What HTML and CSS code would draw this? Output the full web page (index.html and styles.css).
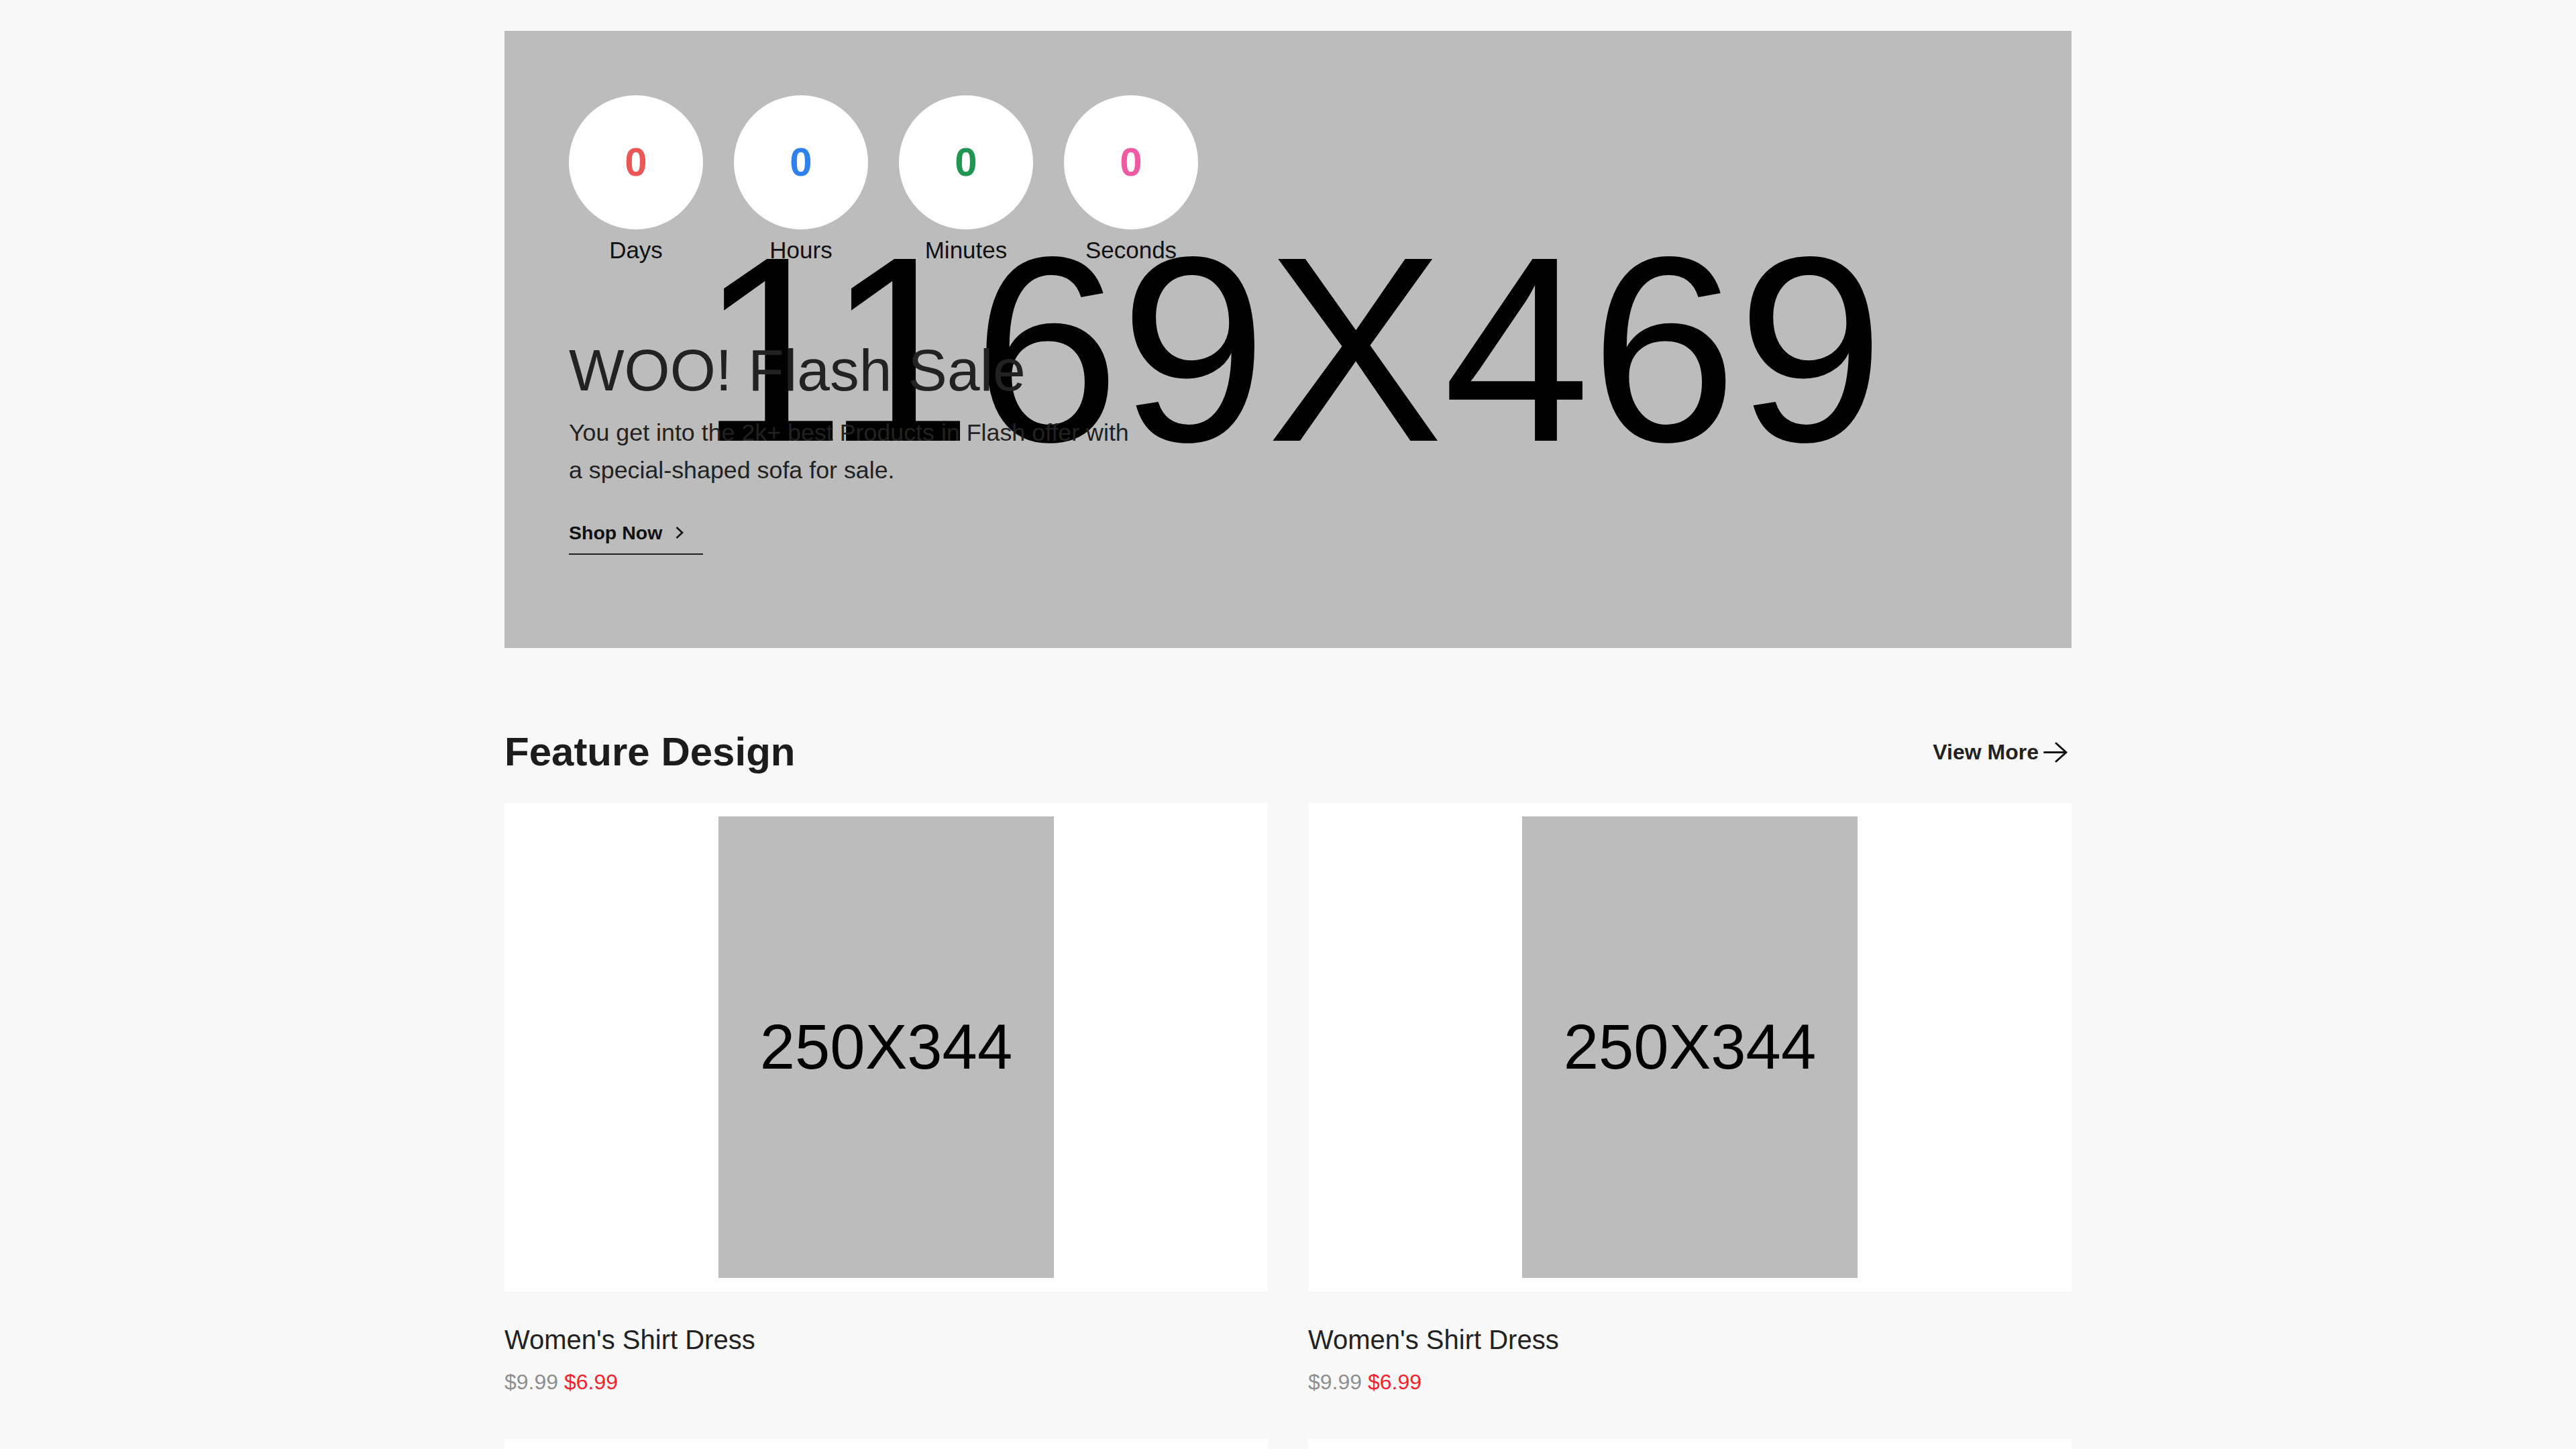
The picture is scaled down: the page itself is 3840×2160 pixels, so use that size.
FILE: index.html
```html
<!DOCTYPE html>
<html lang="en">
<head>
<meta charset="utf-8">
<title>Flash Sale</title>
<link rel="stylesheet" href="styles.css">
</head>
<body>
<main class="page">
  <section class="banner">
    <div class="banner-ph">1169X469</div>
    <div class="banner-content">
      <div class="countdown">
        <div class="cd-item">
          <div class="cd-circle cd-red">0</div>
          <div class="cd-label">Days</div>
        </div>
        <div class="cd-item">
          <div class="cd-circle cd-blue">0</div>
          <div class="cd-label">Hours</div>
        </div>
        <div class="cd-item">
          <div class="cd-circle cd-green">0</div>
          <div class="cd-label">Minutes</div>
        </div>
        <div class="cd-item">
          <div class="cd-circle cd-pink">0</div>
          <div class="cd-label">Seconds</div>
        </div>
      </div>
      <h1 class="flash-title">WOO! Flash Sale</h1>
      <p class="flash-text">You get into the 2k+ best Products in Flash offer with a special-shaped sofa for sale.</p>
      <a class="shop-link" href="#">Shop Now
        <svg class="chev" width="14" height="20" viewBox="0 0 14 20" aria-hidden="true"><polyline points="2.5,2 11,10 2.5,18" fill="none" stroke="#1a1a1a" stroke-width="2.8" stroke-linecap="butt" stroke-linejoin="miter"/></svg>
      </a>
    </div>
  </section>

  <section class="feature">
    <div class="feature-head">
      <h2 class="feature-title">Feature Design</h2>
      <a class="view-more" href="#">View More
        <svg class="arrow" width="36" height="31" viewBox="0 0 36 31" aria-hidden="true"><line x1="1.5" y1="15.5" x2="34" y2="15.5" stroke="#111" stroke-width="3" stroke-linecap="round"/><polyline points="19,2 34,15.5 19,29" fill="none" stroke="#111" stroke-width="3" stroke-linecap="round" stroke-linejoin="round"/></svg>
      </a>
    </div>
    <div class="products">
      <article class="product">
        <div class="card"><div class="ph">250X344</div></div>
        <h3 class="p-title">Women's Shirt Dress</h3>
        <div class="price"><span class="old">$9.99</span> <span class="new">$6.99</span></div>
      </article>
      <article class="product">
        <div class="card"><div class="ph">250X344</div></div>
        <h3 class="p-title">Women's Shirt Dress</h3>
        <div class="price"><span class="old">$9.99</span> <span class="new">$6.99</span></div>
      </article>
      <article class="product">
        <div class="card"><div class="ph">250X344</div></div>
        <h3 class="p-title">Women's Shirt Dress</h3>
        <div class="price"><span class="old">$9.99</span> <span class="new">$6.99</span></div>
      </article>
      <article class="product">
        <div class="card"><div class="ph">250X344</div></div>
        <h3 class="p-title">Women's Shirt Dress</h3>
        <div class="price"><span class="old">$9.99</span> <span class="new">$6.99</span></div>
      </article>
    </div>
  </section>
</main>
</body>
</html>
```

FILE: styles.css
```css
* { box-sizing: border-box; }

html, body {
  margin: 0;
  padding: 0;
  background: #f8f8f8;
  font-family: "Liberation Sans", Arial, Helvetica, sans-serif;
  color: #222;
}

.page {
  width: 2336px;
  margin: 46px auto 0;
}

/* Banner */
.banner {
  display: grid;
  height: 920px;
  background: #bcbcbc;
  overflow: hidden;
}

.banner-ph,
.banner-content {
  grid-area: 1 / 1;
}

.banner-ph {
  display: flex;
  align-items: center;
  justify-content: center;
  padding-top: 28px;
  padding-left: 10px;
  font-size: 394px;
  line-height: 452px;
  color: #000;
}

.banner-content {
  padding: 96px;
}

.countdown {
  display: flex;
  gap: 46px;
}

.cd-item {
  width: 200px;
  display: flex;
  flex-direction: column;
  align-items: center;
}

.cd-circle {
  width: 200px;
  height: 200px;
  border-radius: 50%;
  background: #fff;
  display: flex;
  align-items: center;
  justify-content: center;
  font-size: 60px;
  font-weight: bold;
  line-height: 1;
}

.cd-red { color: #eb5757; }
.cd-blue { color: #2f80ed; }
.cd-green { color: #219653; }
.cd-pink { color: #ef5aa3; }

.cd-label {
  margin-top: 11px;
  font-size: 35px;
  line-height: 40px;
  color: #111;
}

.flash-title {
  margin: 109px 0 0;
  font-size: 87.5px;
  line-height: 100px;
  font-weight: normal;
  color: #222;
}

.flash-text {
  margin: 15px 0 0;
  max-width: 852px;
  font-size: 35.8px;
  line-height: 56px;
  color: #222;
}

.shop-link {
  display: flex;
  align-items: center;
  width: 200px;
  margin-top: 48px;
  padding-bottom: 14px;
  border-bottom: 2px solid #222;
  font-size: 28.5px;
  line-height: 34px;
  font-weight: bold;
  color: #111;
  text-decoration: none;
}

.chev {
  margin-left: 19px;
  display: block;
}

/* Feature section */
.feature {
  margin-top: 119px;
}

.feature-head {
  display: flex;
  align-items: center;
  justify-content: space-between;
}

.feature-title {
  margin: 0;
  font-size: 60px;
  line-height: 72px;
  font-weight: bold;
  color: #1c1c1c;
}

.view-more {
  display: flex;
  align-items: center;
  font-size: 32px;
  line-height: 40px;
  font-weight: bold;
  color: #222;
  text-decoration: none;
}

.arrow {
  display: block;
  margin-left: 7px;
  margin-right: 6px;
}

.products {
  display: grid;
  grid-template-columns: 1fr 1fr;
  column-gap: 60px;
  row-gap: 65px;
  margin-top: 40px;
}

.card {
  height: 728px;
  padding: 20px 0;
  background: #fff;
  display: flex;
  justify-content: center;
}

.ph {
  width: 500px;
  height: 688px;
  background: #bcbcbc;
  display: flex;
  align-items: center;
  justify-content: center;
  font-size: 94px;
  color: #000;
}

.p-title {
  margin: 48px 0 0;
  font-size: 40px;
  line-height: 48px;
  font-weight: normal;
  color: #222;
}

.price {
  margin-top: 19px;
  font-size: 32px;
  line-height: 40px;
}

.old { color: #8f8f8f; }
.new { color: #f5222d; }
```
